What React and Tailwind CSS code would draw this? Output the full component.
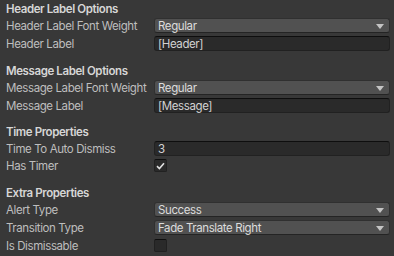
import React from "react";

function Arrow() {
  return (
    <svg width="8" height="5" viewBox="0 0 8 5" className="absolute right-[5px] top-[5px]">
      <path d="M0 0 H8 L4 5 Z" fill="#c4c4c4" />
    </svg>
  );
}

function Dropdown({ value }) {
  return (
    <div className="relative h-[15px] w-full whitespace-nowrap rounded-[3px] border border-[#303030] border-b-[#242424] bg-[#515151] pl-[3px] text-[11.5px] leading-[14px] tracking-[-0.4px] text-[#dcdcdc]">
      {value}
      <Arrow />
    </div>
  );
}

function TextField({ value }) {
  return (
    <div className="h-[15px] w-full whitespace-nowrap rounded-[3px] border border-[#212121] border-t-[#0e0e0e] bg-[#2a2a2a] pl-[3px] text-[11.5px] leading-[14px] tracking-[-0.4px] text-[#d2d2d2]">
      {value}
    </div>
  );
}

function Checkbox({ checked }) {
  return (
    <div className="flex h-[13px] w-[13px] items-center justify-center rounded-[2px] border border-[#212121] border-t-[#0e0e0e] bg-[#2a2a2a]">
      {checked && (
        <svg width="9" height="8" viewBox="0 0 9 8">
          <path d="M1 4.2 L3.4 6.5 L8 1.2" stroke="#e0e0e0" strokeWidth="1.6" fill="none" />
        </svg>
      )}
    </div>
  );
}

function Row({ label, children, h = "h-[18px]" }) {
  return (
    <div className={`flex ${h} items-start`}>
      <div className="w-[154px] shrink-0 whitespace-nowrap pl-[6px] text-[11.5px] leading-[16px] tracking-[-0.4px] text-[#bebebe]">{label}</div>
      <div className="flex-1 pr-[4px]">{children}</div>
    </div>
  );
}

function Header({ children, className = "" }) {
  return (
    <div className={`flex h-[18px] items-center whitespace-nowrap pl-[6px] pt-[2px] text-[11.5px] font-semibold tracking-[-0.4px] text-[#d6d6d6] ${className}`}>
      {children}
    </div>
  );
}

export default function App() {
  return (
    <div
      className="h-[256px] w-[394px] overflow-hidden bg-[#383838]"
      style={{ fontFamily: "Inter, 'Noto Sans', sans-serif" }}
    >
      <Header>Header Label Options</Header>
      <Row label="Header Label Font Weight">
        <Dropdown value="Regular" />
      </Row>
      <Row label="Header Label">
        <TextField value="[Header]" />
      </Row>

      <Header className="mt-[8px]">Message Label Options</Header>
      <Row label="Message Label Font Weight">
        <Dropdown value="Regular" />
      </Row>
      <Row label="Message Label">
        <TextField value="[Message]" />
      </Row>

      <Header className="mt-[7px]">Time Properties</Header>
      <Row label="Time To Auto Dismiss" h="h-[17px]">
        <TextField value="3" />
      </Row>
      <Row label="Has Timer">
        <div className="pt-[1px]">
          <Checkbox checked />
        </div>
      </Row>

      <Header className="mt-[8px]">Extra Properties</Header>
      <Row label="Alert Type">
        <Dropdown value="Success" />
      </Row>
      <Row label="Transition Type">
        <Dropdown value="Fade Translate Right" />
      </Row>
      <Row label="Is Dismissable">
        <div className="pt-[1px]">
          <Checkbox />
        </div>
      </Row>
    </div>
  );
}
